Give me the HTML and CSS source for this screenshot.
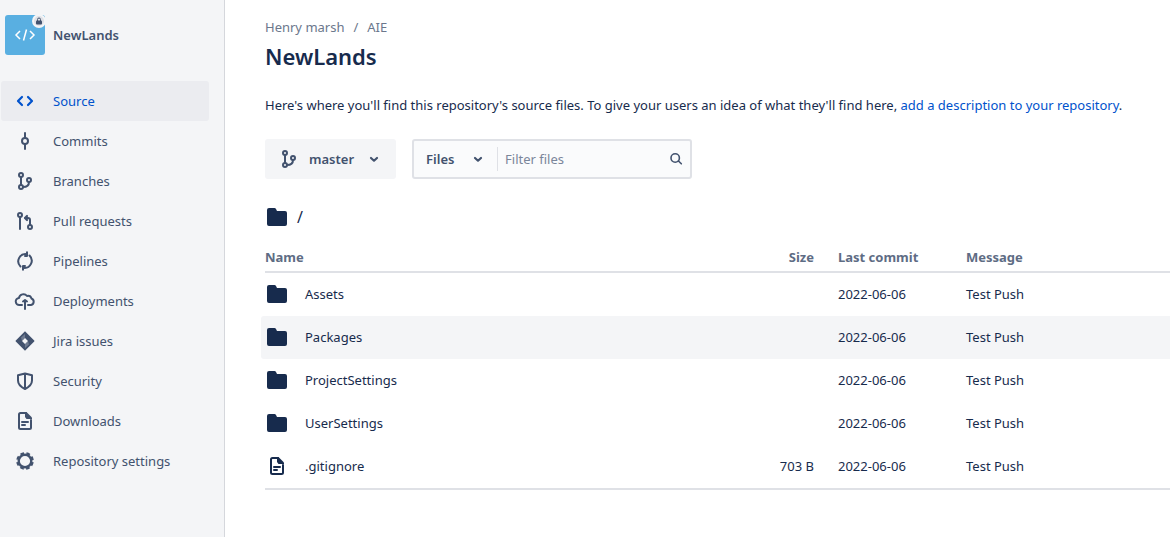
FILE: index.html
```html
<!DOCTYPE html>
<html lang="en">
<head>
<meta charset="utf-8">
<title>NewLands</title>
<link rel="stylesheet" href="styles.css">
</head>
<body>
<svg class="sprite" aria-hidden="true">
  <symbol id="source" viewBox="0 0 24 24"><path d="M9 8l-4 4 4 4M15 8l4 4-4 4" fill="none" stroke="currentColor" stroke-width="2.2" stroke-linecap="round" stroke-linejoin="round"/></symbol>
  <symbol id="commit" viewBox="0 0 24 24"><g fill="none" stroke="currentColor" stroke-width="2" stroke-linecap="round"><circle cx="12" cy="12" r="3"/><path d="M12 4v5M12 15v5"/></g></symbol>
  <symbol id="branch" viewBox="0 0 24 24"><g fill="none" stroke="currentColor" stroke-width="2"><circle cx="8" cy="6" r="2"/><circle cx="8" cy="18" r="2"/><circle cx="16" cy="11" r="2"/><path d="M8 8v8M16 13c0 3-2 5-6 5"/></g></symbol>
  <symbol id="pull" viewBox="0 0 24 24"><g fill="none" stroke="currentColor" stroke-width="2" stroke-linecap="round" stroke-linejoin="round"><circle cx="7" cy="6" r="2"/><circle cx="17" cy="18" r="2"/><path d="M7 8v12M12.500 9H15q2 0 2 2v5"/><path d="M14 7l-2 2 2 2" stroke-width="2.200"/></g></symbol>
  <symbol id="pipeline" viewBox="0 0 24 24"><g fill="none" stroke="currentColor" stroke-width="2" stroke-linecap="round" stroke-linejoin="round"><path d="M7.500 17.500A7.200 7.200 0 0 1 13.500 5.200M16.500 6.500A7.200 7.200 0 0 1 10.500 18.800"/><path d="M14 3.300v3.700h-2M10 20.700V17h2"/></g></symbol>
  <symbol id="deploy" viewBox="0 0 24 24"><g fill="none" stroke="currentColor" stroke-width="2" stroke-linecap="round" stroke-linejoin="round"><path d="M9 16H6.500a3.500 3.500 0 0 1-.5-7 4.500 4.500 0 0 1 8-2 3.800 3.800 0 0 1 4.500 2.500 3.400 3.400 0 0 1-.5 6.500h-3"/><path d="M12 20v-8M10 12.500l2-1.500 2 1.500"/></g></symbol>
  <symbol id="jira" viewBox="0 0 24 24"><path fill="currentColor" fill-rule="evenodd" d="M12 2.200l9.200 9.200q.6.600 0 1.200L12 21.800l-9.200-9.200q-.6-.6 0-1.200zM12 9l-3 3 3 3 3-3z"/><path d="M12 5v4l-3 3-1-3.500zM12 19v-4l3-3 1 3.500z" fill="#f4f5f7" opacity=".25"/></symbol>
  <symbol id="shield" viewBox="0 0 24 24"><path d="M12 4.500l7 1.700v5.300c0 4-3 6.500-7 8.500-4-2-7-4.500-7-8.500V6.200zM12 4.500V20" fill="none" stroke="currentColor" stroke-width="2" stroke-linejoin="round"/></symbol>
  <symbol id="document" viewBox="0 0 24 24"><path d="M13 4H7.500Q6 4 6 5.500v13Q6 20 7.500 20h9q1.500 0 1.500-1.500V11M9 13h6M9 16h3" fill="none" stroke="currentColor" stroke-width="2" stroke-linecap="round"/><path d="M12 3h1.500L19 8.500V10h-5.500L12 8z" fill="currentColor"/></symbol>
  <symbol id="gear" viewBox="0 0 24 24"><g fill="none" stroke="currentColor"><circle cx="12" cy="12" r="6.300" stroke-width="2.400"/><circle cx="12" cy="12" r="7.800" stroke-width="2" stroke-dasharray="3.700 2.426" stroke-dashoffset="-1.200"/></g></symbol>
  <symbol id="chevron" viewBox="0 0 24 24"><path d="M9 11l3 2.700 3-2.700" fill="none" stroke="currentColor" stroke-width="2.200" stroke-linecap="round" stroke-linejoin="round"/></symbol>
  <symbol id="search" viewBox="0 0 24 24"><g fill="none" stroke="currentColor" stroke-width="1.600" stroke-linecap="round"><circle cx="11.200" cy="11" r="4.200"/><path d="M14.500 14l2.800 2.800"/></g></symbol>
  <symbol id="folder" viewBox="0 0 24 24"><path d="M2 5q0-2 2-2h5.500q1 0 1.500 1l1 2h8q2 0 2 2v11q0 2-2 2H4q-2 0-2-2z" fill="currentColor"/></symbol>
</svg>
<div class="app">
  <aside class="sidebar">
    <div class="repo">
      <div class="avatar">
        <svg class="avatar-icon" viewBox="0 0 24 16" aria-hidden="true"><path d="M7 4L3 8l4 4M17 4l4 4-4 4M13.500 2.500l-3 11" fill="none" stroke="#fff" stroke-width="1.500"/></svg>
        <span class="lock"><svg viewBox="0 0 8 8" aria-hidden="true"><path d="M2.500 4V2.500a1.500 1.500 0 0 1 3 0V4" fill="none" stroke="#42526e"/><rect x="1" y="3.500" width="6" height="4" rx="1" fill="#42526e"/></svg></span>
      </div>
      <span class="repo-name">NewLands</span>
    </div>
    <nav class="nav">
      <a class="nav-item active" href="#"><svg class="icon"><use href="#source"/></svg>Source</a>
      <a class="nav-item" href="#"><svg class="icon"><use href="#commit"/></svg>Commits</a>
      <a class="nav-item" href="#"><svg class="icon"><use href="#branch"/></svg>Branches</a>
      <a class="nav-item" href="#"><svg class="icon"><use href="#pull"/></svg>Pull requests</a>
      <a class="nav-item" href="#"><svg class="icon"><use href="#pipeline"/></svg>Pipelines</a>
      <a class="nav-item" href="#"><svg class="icon"><use href="#deploy"/></svg>Deployments</a>
      <a class="nav-item" href="#"><svg class="icon"><use href="#jira"/></svg>Jira issues</a>
      <a class="nav-item" href="#"><svg class="icon"><use href="#shield"/></svg>Security</a>
      <a class="nav-item" href="#"><svg class="icon"><use href="#document"/></svg>Downloads</a>
      <a class="nav-item" href="#"><svg class="icon"><use href="#gear"/></svg>Repository settings</a>
    </nav>
  </aside>
  <main class="main">
    <nav class="breadcrumbs"><a href="#">Henry marsh</a><span>/</span><a href="#">AIE</a></nav>
    <h1 class="title">NewLands</h1>
    <p class="intro">Here's where you'll find this repository's source files. To give your users an idea of what they'll find here, <a href="#">add a description to your repository</a>.</p>
    <div class="toolbar">
      <button class="branch-button" type="button"><svg class="icon"><use href="#branch"/></svg><span>master</span><svg class="icon"><use href="#chevron"/></svg></button>
      <div class="filter">
        <div class="kind">
          <select class="kind-select" aria-label="Filter type"><option>Files</option></select>
          <svg class="icon kind-chevron"><use href="#chevron"/></svg>
        </div>
        <input class="filter-input" type="text" placeholder="Filter files" aria-label="Filter files">
        <svg class="icon"><use href="#search"/></svg>
      </div>
    </div>
    <div class="path"><svg class="icon"><use href="#folder"/></svg><span>/</span></div>
    <table class="files">
      <thead>
        <tr><th class="name">Name</th><th class="size">Size</th><th class="date">Last commit</th><th class="message">Message</th></tr>
      </thead>
      <tbody>
        <tr><td><a class="file" href="#"><svg class="icon"><use href="#folder"/></svg>Assets</a></td><td class="size"></td><td class="date">2022-06-06</td><td class="message">Test Push</td></tr>
        <tr class="hovered"><td><a class="file" href="#"><svg class="icon"><use href="#folder"/></svg>Packages</a></td><td class="size"></td><td class="date">2022-06-06</td><td class="message">Test Push</td></tr>
        <tr><td><a class="file" href="#"><svg class="icon"><use href="#folder"/></svg>ProjectSettings</a></td><td class="size"></td><td class="date">2022-06-06</td><td class="message">Test Push</td></tr>
        <tr><td><a class="file" href="#"><svg class="icon"><use href="#folder"/></svg>UserSettings</a></td><td class="size"></td><td class="date">2022-06-06</td><td class="message">Test Push</td></tr>
        <tr><td><a class="file" href="#"><svg class="icon"><use href="#document"/></svg>.gitignore</a></td><td class="size">703 B</td><td class="date">2022-06-06</td><td class="message">Test Push</td></tr>
      </tbody>
    </table>
  </main>
</div>
</body>
</html>
```

FILE: styles.css
```css
* { box-sizing: border-box; }
body { margin: 0; background: #fff; color: #172b4d; font: 13px/20px "Noto Sans", "Open Sans", sans-serif; }
a { color: inherit; text-decoration: none; }
button, input, select { font: inherit; color: inherit; border: 0; margin: 0; padding: 0; background: transparent; outline: 0; }
.sprite { display: none; }
.icon { width: 24px; height: 24px; flex: none; }
.app { display: flex; min-height: 100vh; }

.sidebar { flex: none; width: 225px; padding: 15px 15px 0 1px; background: #f4f5f7; border-right: 1px solid #d5d7dc; color: #42526e; }
.repo { display: flex; align-items: center; gap: 8px; padding-left: 4px; }
.avatar { position: relative; display: grid; place-items: center; width: 40px; height: 40px; border-radius: 3px; background: #59afe1; }
.avatar-icon { width: 24px; height: 16px; }
.lock { position: absolute; top: -1px; right: -1px; display: grid; place-items: center; width: 14px; height: 14px; border: 2px solid #f4f5f7; border-radius: 50%; background: #dfe1e6; }
.lock svg { width: 8px; height: 8px; }
.repo-name { font-weight: 600; }
.nav { margin-top: 26px; }
.nav-item { display: flex; align-items: center; gap: 16px; height: 40px; padding: 0 12px; border-radius: 3px; }
.nav-item.active { background: #ebecf0; color: #0052cc; }

.main { flex: 1; min-width: 0; padding: 17px 0 48px 40px; }
.breadcrumbs { display: flex; gap: 9px; color: #6b778c; }
.title { margin: 5px 0 0; font-size: 22px; line-height: 28px; font-weight: 600; }
.intro { margin: 25px 0 0; }
.intro a { color: #0052cc; }
.toolbar { display: flex; gap: 16px; margin-top: 24px; color: #42526e; }
.branch-button { display: flex; align-items: center; gap: 8px; height: 40px; padding: 0 10px 0 12px; border-radius: 3px; background: #f4f5f7; font-weight: 600; }
.filter { display: flex; align-items: center; width: 280px; height: 40px; padding-right: 2px; border: 2px solid #dfe1e6; border-radius: 3px; background: #fafbfc; }
.kind { display: flex; position: relative; width: 84px; height: 24px; border-right: 1px solid #dfe1e6; }
.kind-select { width: 100%; padding-left: 12px; appearance: none; font-weight: 600; }
.kind-chevron { position: absolute; top: 0; right: 7px; pointer-events: none; }
.filter-input { flex: 1; min-width: 0; height: 24px; padding-left: 7px; }
.filter-input::placeholder { color: #7a869a; opacity: 1; }
.path { display: flex; align-items: center; gap: 8px; margin-top: 26px; font-size: 16px; }

.files { width: 100%; margin-top: 16px; border-spacing: 0; table-layout: fixed; border-bottom: 2px solid #dfe1e6; }
.files th { height: 28px; padding: 0 0 2px; border-bottom: 2px solid #dfe1e6; color: #5e6c84; font-weight: 700; text-align: left; }
.files td { height: 43px; padding: 0 0 2px; }
.files .size { width: 88px; padding-right: 12px; text-align: right; }
.files .date { width: 128px; padding-left: 12px; }
.files .message { width: 216px; padding-left: 12px; }
.file { display: flex; align-items: center; gap: 16px; }
.hovered td { background: #f4f5f7; }
.hovered td:first-child { border-radius: 3px 0 0 3px; box-shadow: -4px 0 0 #f4f5f7; }
```
